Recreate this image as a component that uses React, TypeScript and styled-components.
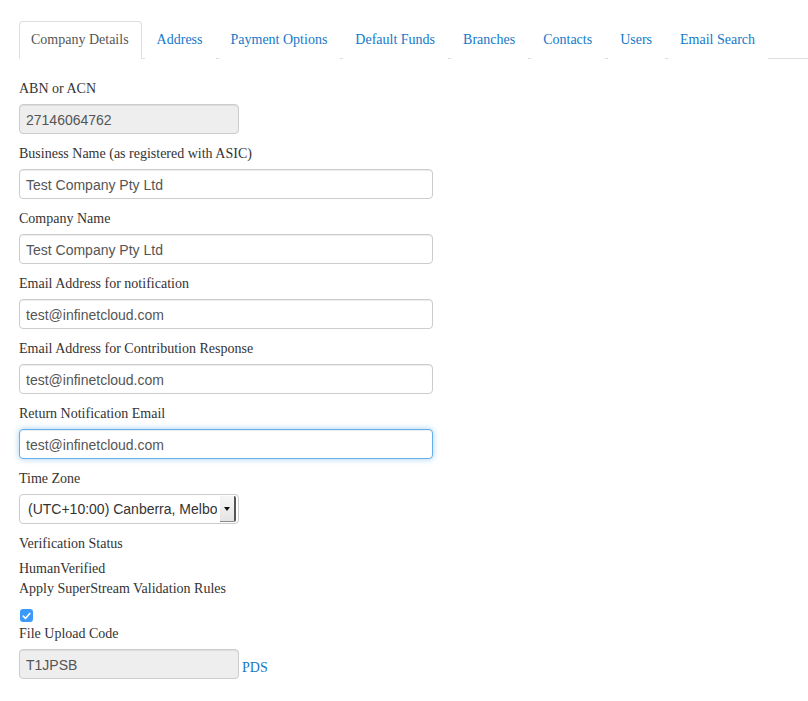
import React from "react";
import styled, { createGlobalStyle } from "styled-components";

const GlobalStyle = createGlobalStyle`
  html, body {
    margin: 0;
    padding: 0;
    background: #ffffff;
  }
  body {
    font-family: "Liberation Serif", "Times New Roman", serif;
    font-size: 14px;
    line-height: 20px;
    color: #333333;
  }
`;

const Page = styled.div`
  padding: 21px 0 0 19px;
`;

const TabList = styled.ul`
  display: flex;
  list-style: none;
  margin: 0 0 19px 0;
  padding: 0;
  border-bottom: 1px solid #dddddd;
`;

const Tab = styled.li<{ $active?: boolean }>`
  margin: 0 3px -1px 0;
  padding: 8px 12px 8px 11px;
  border: 1px solid ${(p) => (p.$active ? "#dddddd" : "transparent")};
  border-bottom-color: ${(p) => (p.$active ? "#ffffff" : "transparent")};
  border-radius: 4px 4px 0 0;
  background: #ffffff;
  color: ${(p) => (p.$active ? "#555555" : "#1479c9")};
  white-space: nowrap;
  cursor: pointer;
`;

const Group = styled.div<{ $gap?: number }>`
  margin-bottom: ${(p) => p.$gap ?? 9}px;
`;

const Label = styled.div`
  height: 20px;
  line-height: 22px;
  margin-bottom: 6px;
`;

const Text = styled.div`
  height: 20px;
`;

const Input = styled.input<{ $wide?: boolean; $focus?: boolean }>`
  display: block;
  box-sizing: border-box;
  width: ${(p) => (p.$wide ? 414 : 220)}px;
  height: 30px;
  padding: 5px 6px 3px;
  font-family: "Liberation Sans", Arial, Helvetica, sans-serif;
  font-size: 14px;
  color: #555555;
  background: ${(p) => (p.readOnly ? "#eeeeee" : "#ffffff")};
  border: 1px solid ${(p) => (p.$focus ? "#66afe9" : "#cccccc")};
  border-radius: 4px;
  box-shadow: ${(p) =>
    p.$focus
      ? "inset 0 1px 1px rgba(0,0,0,.075), 0 0 6px rgba(102,175,233,.6)"
      : "inset 0 1px 1px rgba(0,0,0,.075)"};
  outline: none;
`;

const InlineRow = styled.div`
  display: flex;
  align-items: flex-end;
  gap: 3px;
`;

const Link = styled.a`
  color: #1479c9;
  text-decoration: none;
  line-height: 20px;
  margin-bottom: 1px;
`;

const SelectBox = styled.div`
  display: flex;
  box-sizing: border-box;
  width: 220px;
  height: 30px;
  border: 1px solid #cccccc;
  border-radius: 4px;
  background: #ffffff;
  overflow: hidden;
`;

const SelectText = styled.div`
  flex: 1;
  margin-right: 3px;
  padding-left: 8px;
  line-height: 29px;
  font-family: "Liberation Sans", Arial, Helvetica, sans-serif;
  font-size: 14px;
  color: #333333;
  white-space: nowrap;
  overflow: hidden;
`;

const SelectArrow = styled.div`
  width: 14px;
  margin: 1px 2px 1px 0;
  display: flex;
  align-items: center;
  justify-content: center;
  background: linear-gradient(#f6f6f6, #e4e4e4);
  border-right: 2px solid #555555;
  border-bottom: 1px solid #888888;
  border-radius: 0 2px 2px 0;
`;

const Check = styled.span`
  display: flex;
  align-items: center;
  justify-content: center;
  width: 13px;
  height: 13px;
  margin: 10px 0 1px 1px;
  border-radius: 3px;
  background: #3b99fc;
`;

const tabs = [
  "Company Details",
  "Address",
  "Payment Options",
  "Default Funds",
  "Branches",
  "Contacts",
  "Users",
  "Email Search",
];

const fields = [
  { label: "Business Name (as registered with ASIC)", value: "Test Company Pty Ltd" },
  { label: "Company Name", value: "Test Company Pty Ltd" },
  { label: "Email Address for notification", value: "test@infinetcloud.com" },
  { label: "Email Address for Contribution Response", value: "test@infinetcloud.com" },
  { label: "Return Notification Email", value: "test@infinetcloud.com", focus: true },
];

export default function App() {
  return (
    <Page>
      <GlobalStyle />
      <TabList>
        {tabs.map((t, i) => (
          <Tab key={t} $active={i === 0}>
            {t}
          </Tab>
        ))}
      </TabList>

      <Group>
        <Label>ABN or ACN</Label>
        <Input readOnly value="27146064762" />
      </Group>

      {fields.map((f) => (
        <Group key={f.label}>
          <Label>{f.label}</Label>
          <Input $wide $focus={f.focus} defaultValue={f.value} />
        </Group>
      ))}

      <Group $gap={10}>
        <Label>Time Zone</Label>
        <SelectBox>
          <SelectText>(UTC+10:00) Canberra, Melbourne, Sydney</SelectText>
          <SelectArrow>
            <svg width="6" height="4" viewBox="0 0 6 4">
              <path d="M0 0 L6 0 L3 4 Z" fill="#111111" />
            </svg>
          </SelectArrow>
        </SelectBox>
      </Group>

      <Group $gap={5}>
        <Text>Verification Status</Text>
      </Group>
      <Text>HumanVerified</Text>
      <Text>Apply SuperStream Validation Rules</Text>
      <Check>
        <svg width="9" height="8" viewBox="0 0 9 8">
          <path
            d="M1.2 4.2 L3.5 6.4 L7.8 1.4"
            fill="none"
            stroke="#ffffff"
            strokeWidth="1.6"
            strokeLinecap="round"
            strokeLinejoin="round"
          />
        </svg>
      </Check>
      <Label>File Upload Code</Label>
      <InlineRow>
        <Input readOnly value="T1JPSB" />
        <Link href="#">PDS</Link>
      </InlineRow>
    </Page>
  );
}
